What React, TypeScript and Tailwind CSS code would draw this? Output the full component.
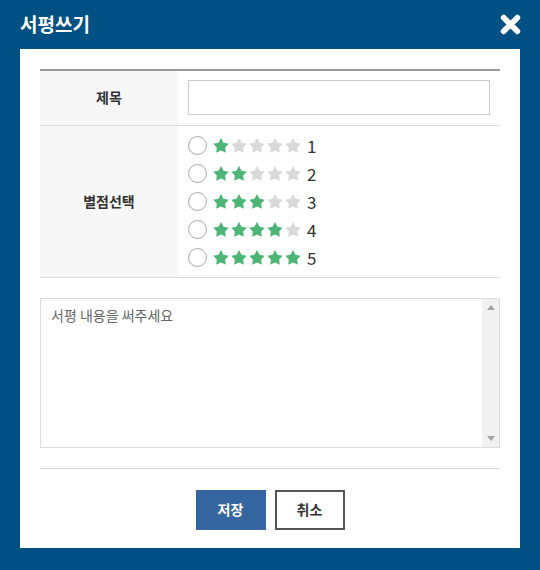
import React, { useState } from "react"

const font = { fontFamily: '"Noto Sans CJK KR", "Noto Sans", sans-serif' }

const Star = ({ on }: { on: boolean }) => (
  <svg width="18" height="17" viewBox="-0.5 0 25 24">
    <path
      d="M12 1.5L15.6 8L22.9 9.5L17.9 14.9L18.8 22.3L12 19.2L5.2 22.3L6.1 14.9L1.1 9.5L8.4 8Z"
      fill={on ? "#4db677" : "#d9d9d9"}
    />
  </svg>
)

export default function App() {
  const [score, setScore] = useState(0)
  const [title, setTitle] = useState("")

  return (
    <div className="w-[540px] h-[570px] bg-[#005083] flex flex-col" style={font}>
      <div className="h-[49px] flex items-center justify-between pl-[20px] pr-[19px]">
        <h1 className="text-white text-[19px] font-bold">서평쓰기</h1>
        <svg width="21" height="21" viewBox="0 0 20 20">
          <path
            d="M3.5 3.5L16.5 16.5M16.5 3.5L3.5 16.5"
            stroke="#fff"
            strokeWidth="5.5"
            strokeLinecap="round"
          />
        </svg>
      </div>
      <div className="mx-[20px] h-[499px] bg-white px-[20px] pt-[20px]">
        <table className="w-full border-t-2 border-[#999] text-[14px]">
          <tbody>
            <tr className="border-b border-[#ddd]">
              <th className="w-[138px] h-[55px] bg-[#f7f7f7] font-bold text-[#333]">
                제목
              </th>
              <td className="pl-[10px] pr-[10px]">
                <input
                  value={title}
                  onChange={(e) => setTitle(e.target.value)}
                  className="w-full h-[35px] border border-[#ccc] outline-none px-2"
                />
              </td>
            </tr>
            <tr className="border-b border-[#ddd]">
              <th className="bg-[#f7f7f7] font-bold text-[#333]">별점선택</th>
              <td className="pl-[10px] pt-[6px] pb-[5px]">
                {[1, 2, 3, 4, 5].map((n) => (
                  <label
                    key={n}
                    className="flex items-center h-[28px] cursor-pointer"
                    onClick={() => setScore(n)}
                  >
                    <span className="w-[19px] h-[19px] rounded-full border border-[#aaa] mr-[5px] flex items-center justify-center">
                      {score === n && (
                        <span className="w-[9px] h-[9px] rounded-full bg-[#3566a0]" />
                      )}
                    </span>
                    {[1, 2, 3, 4, 5].map((s) => (
                      <Star key={s} on={s <= n} />
                    ))}
                    <span className="ml-[5px] text-[17px] text-[#333] leading-none">
                      {n}
                    </span>
                  </label>
                ))}
              </td>
            </tr>
          </tbody>
        </table>
        <div className="mt-[20px] h-[150px] border border-[#ddd] flex">
          <textarea
            placeholder="서평 내용을 써주세요"
            className="flex-1 h-full px-[10px] py-[6px] text-[14px] text-[#333] placeholder:text-[#666] outline-none resize-none"
          />
          <div className="w-[17px] bg-[#f1f1f1] flex flex-col items-center justify-between py-[6px]">
            <svg width="8" height="5" viewBox="0 0 8 5">
              <path d="M0 5L4 0L8 5z" fill="#a3a3a3" />
            </svg>
            <svg width="8" height="5" viewBox="0 0 8 5">
              <path d="M0 0L8 0L4 5z" fill="#a3a3a3" />
            </svg>
          </div>
        </div>
        <div className="mt-[20px] border-t border-[#ddd] flex justify-center gap-[9px] pt-[21px]">
          <button className="w-[70px] h-[40px] bg-[#3566a0] text-white text-[14px] font-bold">
            저장
          </button>
          <button className="w-[70px] h-[40px] border-2 border-[#555] bg-white text-[#333] text-[14px] font-bold">
            취소
          </button>
        </div>
      </div>
    </div>
  )
}
